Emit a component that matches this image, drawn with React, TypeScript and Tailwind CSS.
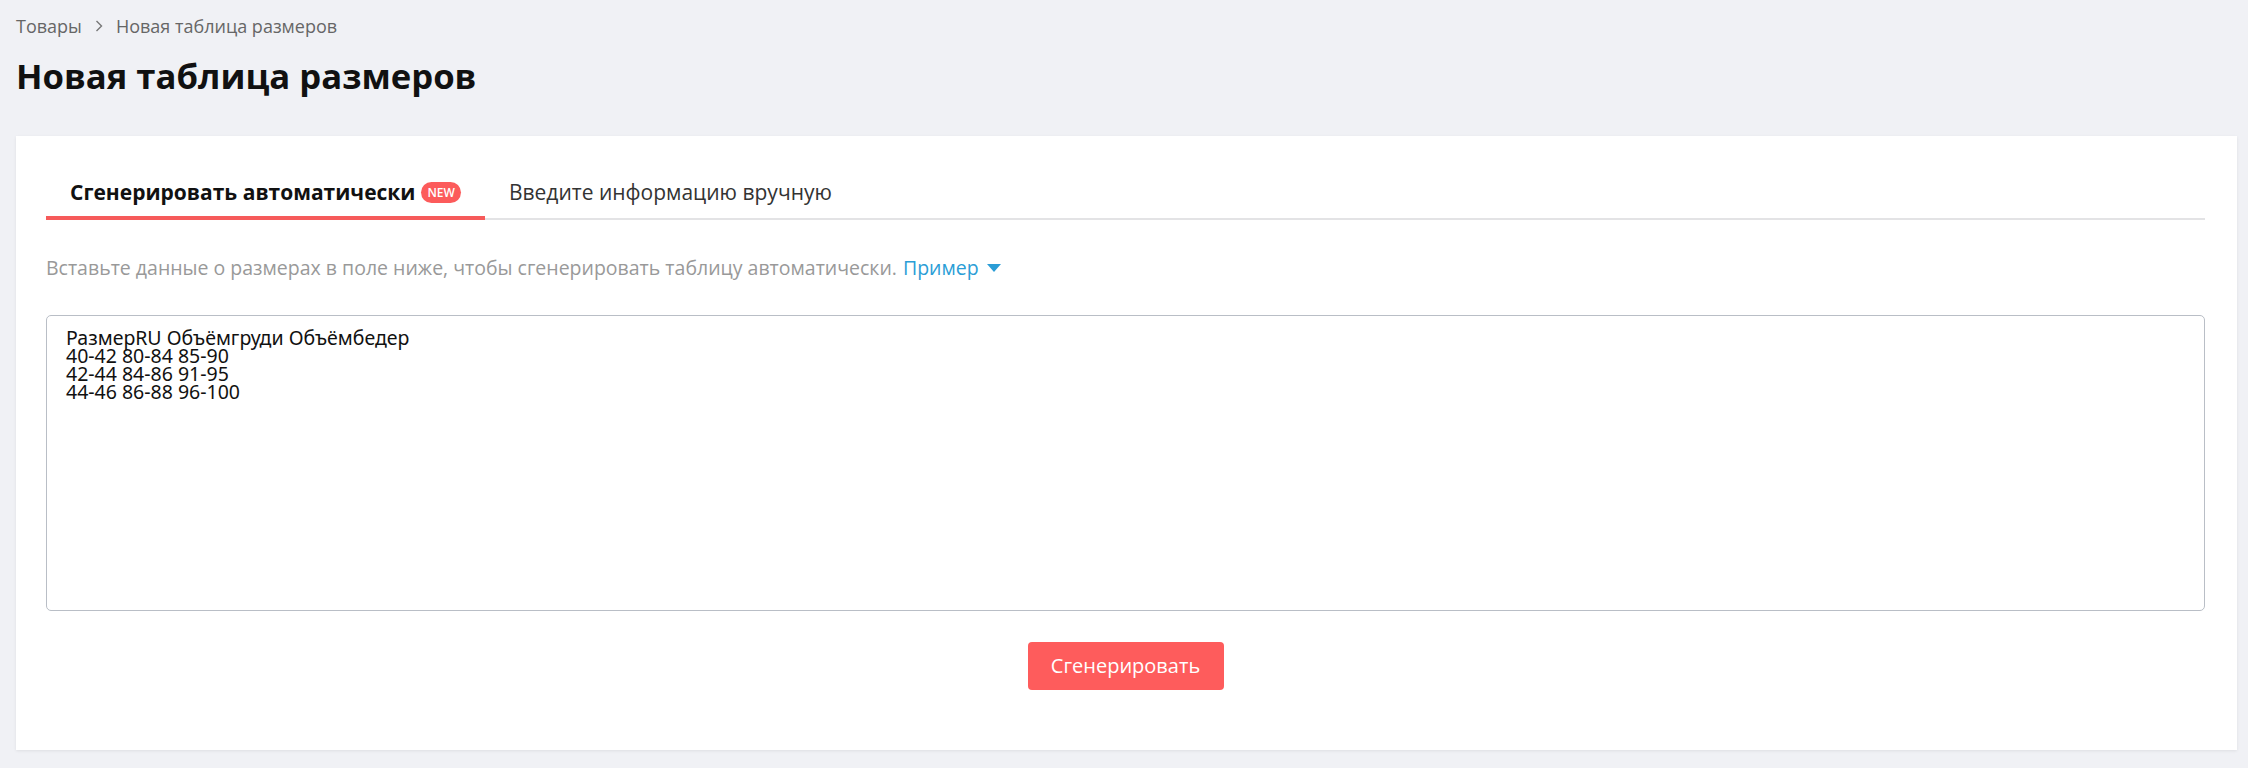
import React, { useState } from 'react';

const sample = `РазмерRU Объёмгруди Объёмбедер
40-42 80-84 85-90
42-44 84-86 91-95
44-46 86-88 96-100`;

export default function App() {
  const [tab, setTab] = useState<'auto' | 'manual'>('auto');
  const [text, setText] = useState(sample);

  return (
    <div
      className="min-h-screen bg-[#f0f1f5] pl-4 pr-[11px] pb-4"
      style={{ fontFamily: '"Open Sans", "Noto Sans", sans-serif' }}
    >
      {/* Breadcrumb */}
      <div className="flex items-center pt-[14px] text-[18px] leading-6 text-[#666]">
        <span>Товары</span>
        <svg className="mx-[13px] w-[8px] h-[12px]" viewBox="0 0 8 12" fill="none">
          <polyline points="1.5,1 6.5,6 1.5,11" stroke="#777" strokeWidth="1.4" />
        </svg>
        <span>Новая таблица размеров</span>
      </div>

      {/* Title */}
      <h1 className="mt-[14px] text-[34.7px] leading-[48px] font-bold text-[#111]">
        Новая таблица размеров
      </h1>

      {/* Card */}
      <div className="mt-[36px] bg-white shadow-[0_1px_3px_rgba(0,0,0,0.08)] pl-[30px] pr-[32px] pt-[42px] pb-[60px]">
        {/* Tabs */}
        <div className="flex items-end border-b-2 border-[#e3e3e5]">
          <button
            onClick={() => setTab('auto')}
            className={`flex items-center px-6 pb-[10px] -mb-[2px] border-b-4 ${
              tab === 'auto' ? 'border-[#f65a5a]' : 'border-transparent'
            }`}
          >
            <span
              className={`text-[21px] leading-7 ${
                tab === 'auto' ? 'font-bold text-[#111]' : 'text-[#333]'
              }`}
            >
              Сгенерировать автоматически
            </span>
            <span className="ml-[6px] h-[21px] px-[6px] rounded-full bg-[#fc5b5b] text-white text-[12px] leading-[21px] font-semibold">
              NEW
            </span>
          </button>
          <button
            onClick={() => setTab('manual')}
            className={`px-6 pb-[10px] -mb-[2px] border-b-4 ${
              tab === 'manual' ? 'border-[#f65a5a]' : 'border-transparent'
            }`}
          >
            <span
              className={`text-[21px] leading-7 ${
                tab === 'manual' ? 'font-bold text-[#111]' : 'text-[#333]'
              }`}
            >
              Введите информацию вручную
            </span>
          </button>
        </div>

        {/* Hint */}
        <div className="mt-9 flex items-center text-[19.5px] leading-6 text-[#999]">
          <span>
            Вставьте данные о размерах в поле ниже, чтобы сгенерировать таблицу автоматически.
          </span>
          <span className="ml-[6px] text-[#2a9dd6]">Пример</span>
          <svg className="ml-[8px] w-[14px] h-[8px]" viewBox="0 0 14 8">
            <polygon points="0,0 14,0 7,8" fill="#2a9dd6" />
          </svg>
        </div>

        {/* Textarea */}
        <textarea
          value={text}
          onChange={e => setText(e.target.value)}
          className="mt-[35px] block w-full h-[296px] resize-none rounded-[5px] border-[1.5px] border-[#b9bec6] bg-white pt-[13px] px-[19px] text-[19.5px] leading-[18px] text-[#111] outline-none"
          style={{ fontFamily: '"Noto Sans", "Open Sans", sans-serif' }}
        />

        {/* Button */}
        <div className="mt-[31px] flex justify-center">
          <button className="w-[196px] h-[48px] rounded-[4px] bg-[#fe5c5c] text-white text-[20px]">
            Сгенерировать
          </button>
        </div>
      </div>
    </div>
  );
}
